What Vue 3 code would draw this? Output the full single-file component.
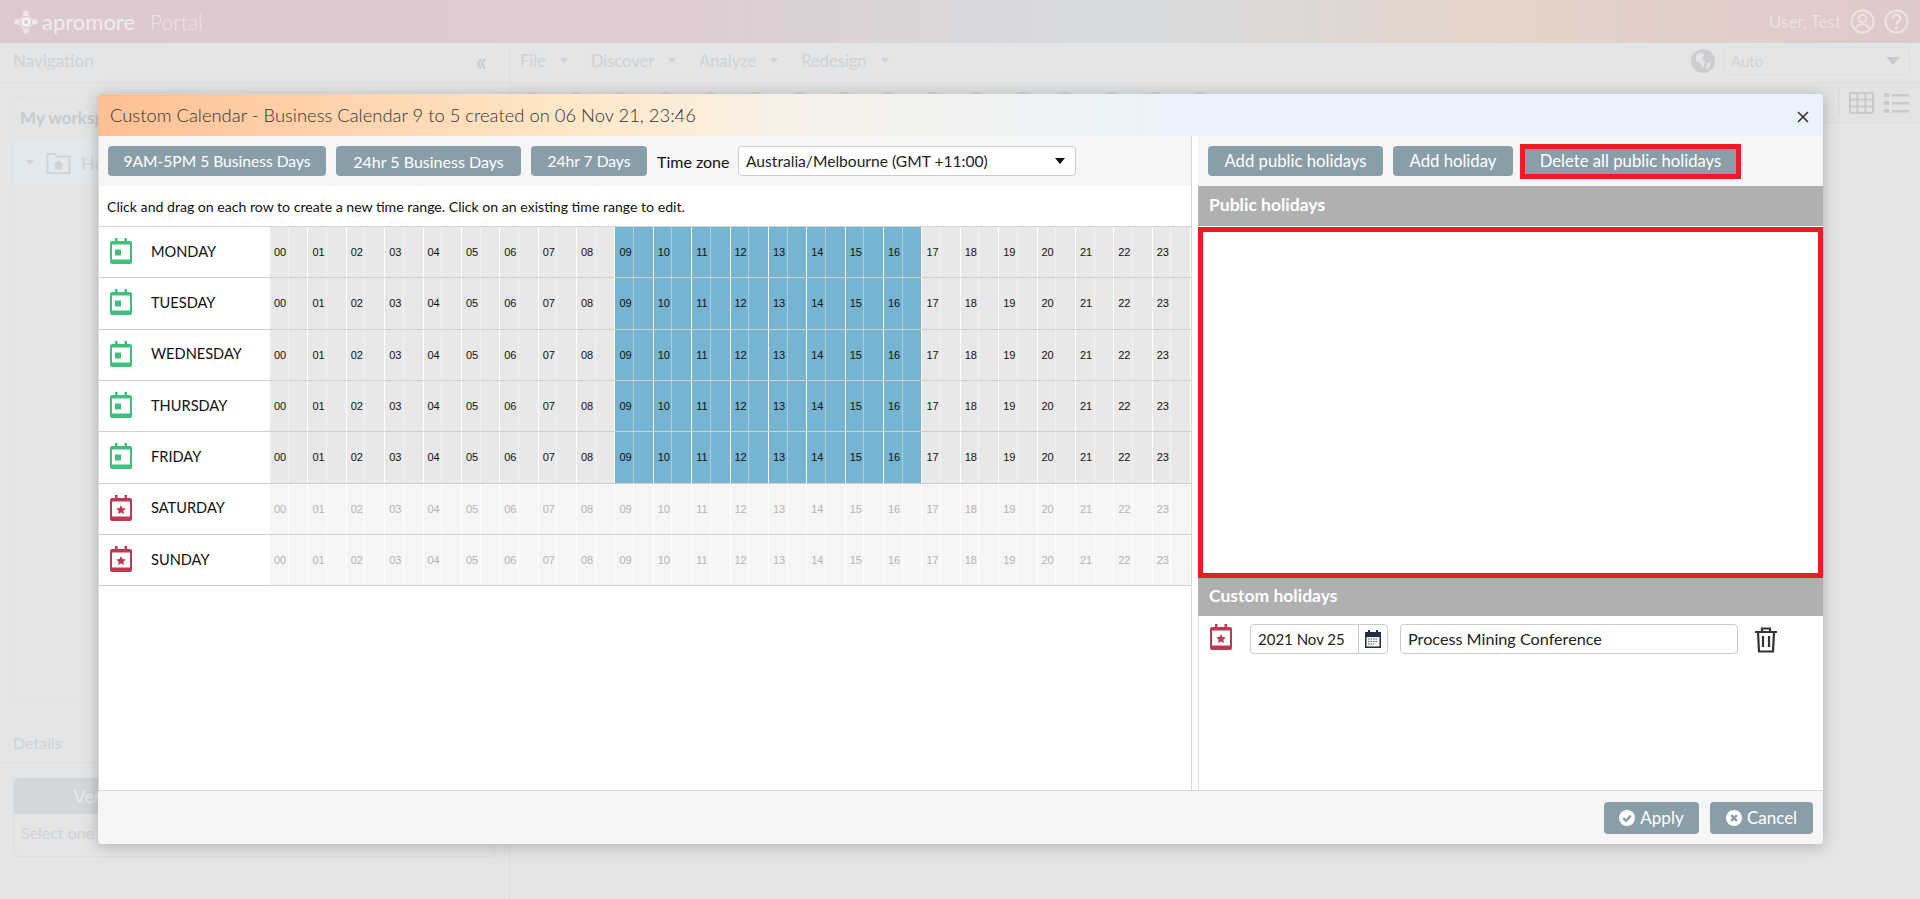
<template>
  <div class="page">
    <header class="topbar">
      <div class="brand">
        <svg class="brand-logo" width="24" height="24" viewBox="0 0 30 30">
          <path d="M15 4 26 15 15 26 4 15Z" fill="none" stroke="#f0e6e8" stroke-width="1.5" />
          <circle cx="15" cy="15" r="6" fill="#f6f1f2" />
          <circle cx="15" cy="15" r="2.5" fill="#dcc8cd" />
          <circle cx="15" cy="4" r="3.5" fill="#f0e6e8" />
          <circle cx="15" cy="26" r="3.5" fill="#f0e6e8" />
          <circle cx="4" cy="15" r="3.5" fill="#f0e6e8" />
          <circle cx="26" cy="15" r="3.5" fill="#f0e6e8" />
        </svg>
        <span class="brand-name">apromore</span>
        <span class="brand-portal">Portal</span>
      </div>
      <div class="user">
        <span>User, Test</span>
        <svg width="25" height="25" viewBox="0 0 26 26" fill="none" stroke="#eee4e2" stroke-width="2">
          <circle cx="13" cy="13" r="11.5" />
          <circle cx="13" cy="10" r="4" />
          <path d="M6 21c1-4.5 4-5 7-5s6 .5 7 5" />
        </svg>
        <svg width="25" height="25" viewBox="0 0 26 26" fill="none" stroke="#eee4e2" stroke-width="2">
          <circle cx="13" cy="13" r="11.5" />
          <path d="M9 10c0-5.5 8-5.5 8 0 0 3-4 3-4 6" stroke-width="2.5" />
          <circle cx="13" cy="19.5" r="0.8" />
        </svg>
      </div>
    </header>

    <div class="shell">
      <aside class="nav">
        <div class="nav-head">
          <span>Navigation</span>
          <span class="nav-collapse">«</span>
        </div>
        <div class="nav-tree">
          <div class="tree-title">My workspace</div>
          <div class="tree-row">
            <span class="caret"></span>
            <svg width="25" height="22" viewBox="0 0 26 24" fill="none" stroke="#d0d2d4" stroke-width="2">
              <path d="M1 23V2h8l2 3h14v18Z" />
              <path d="M13 9l6 5h-2v5H9v-5H7Z" fill="#d0d2d4" stroke="none" />
            </svg>
            <span>Home</span>
          </div>
        </div>
        <div class="nav-details">Details</div>
        <div class="details-card">
          <div class="details-title"><span>Version</span></div>
          <div class="details-body">Select one</div>
        </div>
      </aside>

      <main class="content">
        <div class="menu-bar">
          <span v-for="m in menus" :key="m" class="menu-item">{{ m }}<i class="caret"></i></span>
          <div class="menu-right">
            <svg width="24" height="24" viewBox="0 0 24 24">
              <circle cx="12" cy="12" r="12" fill="#cbcdcf" />
              <path d="M5 6l5-3 3 3-2 4 3 3-2 6-3-5-4-2Z M16 14l4-1-2 6-3 1Z" fill="#e3e5e7" />
            </svg>
            <div class="auto-select">Auto<i class="caret"></i></div>
          </div>
        </div>
        <div class="tool-bar">
          <i v-for="n in 16" :key="n" class="tool-dot"></i>
          <span class="tool-sep"></span>
          <svg width="25" height="22" viewBox="0 0 25 22" fill="none" stroke="#c8cacc" stroke-width="2">
            <rect x="1" y="1" width="23" height="20" rx="1" />
            <path d="M1 7.5h23M1 14.5h23M8.5 1v20M16.5 1v20" />
          </svg>
          <svg width="25" height="20" viewBox="0 0 25 20" fill="#c8cacc">
            <rect x="0" y="0" width="5" height="4" /><rect x="8" y="1" width="17" height="2.5" />
            <rect x="0" y="8" width="5" height="4" /><rect x="8" y="9" width="17" height="2.5" />
            <rect x="0" y="16" width="5" height="4" /><rect x="8" y="17" width="17" height="2.5" />
          </svg>
        </div>
      </main>
    </div>

    <section class="modal">
      <div class="modal-head">
        <span>Custom Calendar - Business Calendar 9 to 5 created on 06 Nov 21, 23:46</span>
        <svg class="modal-close" width="12" height="12" viewBox="0 0 12 12" fill="none" stroke="#2b2b2b" stroke-width="1.5">
          <path d="M1 1l10 10M11 1 1 11" />
        </svg>
      </div>
      <div class="modal-body">
        <div class="left-pane">
          <div class="toolbar">
            <button class="btn w-218">9AM-5PM 5 Business Days</button>
            <button class="btn w-185">24hr 5 Business Days</button>
            <button class="btn w-116">24hr 7 Days</button>
            <label class="tz-label">Time zone</label>
            <div class="tz-select">
              <span>Australia/Melbourne (GMT +11:00)</span>
              <i class="tz-caret"></i>
            </div>
          </div>
          <div class="hint">Click and drag on each row to create a new time range. Click on an existing time range to edit.</div>
          <div class="grid">
            <div v-for="day in days" :key="day.name" class="day-row">
              <div class="day-label">
                <svg class="day-icon" width="22" height="26" viewBox="0 0 22 26" :fill="day.off ? '#bd3b52' : '#3fc07a'">
                  <path fill-rule="evenodd" :d="calendarPath" />
                  <path v-if="day.off" :d="starPath" />
                  <rect v-else x="5" y="11.5" width="6" height="6" />
                </svg>
                <span>{{ day.name }}</span>
              </div>
              <div class="hours" :class="{ off: day.off }">
                <div v-for="h in hours" :key="h" class="hour" :class="{ on: !day.off && h >= 9 && h < 17 }">
                  <span class="half">{{ pad(h) }}</span>
                  <span class="half"></span>
                </div>
              </div>
            </div>
          </div>
        </div>

        <div class="right-pane">
          <div class="toolbar toolbar-right">
            <button class="btn w-175">Add public holidays</button>
            <button class="btn w-120">Add holiday</button>
            <button class="btn w-211 marked">Delete all public holidays</button>
          </div>
          <div class="section-head">Public holidays</div>
          <div class="public-list"></div>
          <div class="section-head section-head-2">Custom holidays</div>
          <div class="custom-list">
            <div class="custom-row">
              <svg width="22" height="26" viewBox="0 0 22 26" fill="#bd3b52">
                <path fill-rule="evenodd" :d="calendarPath" />
                <path :d="starPath" />
              </svg>
              <div class="date-input">
                <span class="date-value">2021 Nov 25</span>
                <span class="date-btn">
                  <svg width="16" height="18" viewBox="0 0 16 18">
                    <path d="M0 2h16v16H0Z" fill="#1f2f45" />
                    <rect x="3" y="0" width="2" height="4" fill="#1f2f45" />
                    <rect x="11" y="0" width="2" height="4" fill="#1f2f45" />
                    <rect x="1.5" y="7" width="13" height="9.5" fill="#f4f4f0" />
                    <path d="M3 9h10M3 11.5h10M3 14h6" stroke="#5b6a7c" stroke-width="1" stroke-dasharray="1.5 1" />
                  </svg>
                </span>
              </div>
              <div class="name-input">Process Mining Conference</div>
              <svg class="trash" width="22" height="26" viewBox="0 0 22 26" fill="none" stroke="#333" stroke-width="2.2">
                <path d="M0 5h22M7 5V1.5h8V5" />
                <path d="M3 5l1 19.5h14L19 5" />
                <path d="M8 9v11M14 9v11" />
              </svg>
            </div>
          </div>
        </div>
      </div>
      <div class="modal-foot">
        <button class="btn btn-foot w-95">
          <svg width="16" height="16" viewBox="0 0 17 17">
            <circle cx="8.5" cy="8.5" r="8.5" fill="#fff" />
            <path d="M4.5 8.5l3 3 5-5.5" fill="none" stroke="#8a9ea8" stroke-width="2.6" />
          </svg>
          Apply
        </button>
        <button class="btn btn-foot w-103">
          <svg width="16" height="16" viewBox="0 0 17 17">
            <circle cx="8.5" cy="8.5" r="8.5" fill="#fff" />
            <path d="M5.5 5.5l6 6M11.5 5.5l-6 6" fill="none" stroke="#8a9ea8" stroke-width="2.6" />
          </svg>
          Cancel
        </button>
      </div>
    </section>
  </div>
</template>

<script setup>
const menus = ['File', 'Discover', 'Analyze', 'Redesign']
const days = [
  { name: 'MONDAY', off: false },
  { name: 'TUESDAY', off: false },
  { name: 'WEDNESDAY', off: false },
  { name: 'THURSDAY', off: false },
  { name: 'FRIDAY', off: false },
  { name: 'SATURDAY', off: true },
  { name: 'SUNDAY', off: true },
]
const hours = Array.from({ length: 24 }, (_, i) => i)
const pad = (n) => String(n).padStart(2, '0')

const calendarPath = 'M5 0h2.5v3h7V0H17v3h3a2 2 0 0 1 2 2v19a2 2 0 0 1-2 2H2a2 2 0 0 1-2-2V5a2 2 0 0 1 2-2h3Zm-3 6.5v15h18v-15Z'
const starPath = 'M11 10l1.4 3.1 3.4.4-2.5 2.3.7 3.3-3-1.7-3 1.7.7-3.3-2.5-2.3 3.4-.4Z'
</script>

<style>
html, body { margin: 0; background: #e3e5e7; overflow: hidden; }
</style>

<style scoped>
.page {
  position: relative;
  width: 1920px;
  height: 899px;
  overflow: hidden;
  background: #e3e5e7;
  font-family: "Lato", "Liberation Sans", sans-serif;
  color: #d0d2d4;
  font-size: 16px;
}
.topbar {
  height: 43px;
  box-sizing: border-box;
  display: flex;
  justify-content: space-between;
  align-items: center;
  padding: 0 11px 0 14px;
  background: linear-gradient(90deg, #dcc9d0 0%, #ddccd0 35%, #d7dce0 58%, #e4d4c8 78%, #dec9cb 100%);
}
.brand { display: flex; align-items: center; color: #f2ecee; }
.brand-name { font-size: 22px; margin-left: 4px; }
.brand-portal { font-size: 21px; margin-left: 15px; font-weight: 300; color: #ebe3e3; }
.user { display: flex; align-items: center; gap: 9px; color: #ebe1df; font-size: 17px; }
.shell { display: flex; height: 856px; }
.nav { width: 510px; flex: none; border-right: 1px solid #dcdee0; box-sizing: border-box; display: flex; flex-direction: column; }
.nav-head {
  height: 40px;
  flex: none;
  box-sizing: border-box;
  display: flex;
  justify-content: space-between;
  align-items: center;
  padding: 0 13px 4px;
  border-bottom: 1px solid #dcdee0;
  font-size: 17px;
}
.nav-collapse { font-size: 26px; line-height: 1; margin-right: 9px; color: #c8cacc; }
.nav-tree { margin: 13px 13px 0; height: 604px; flex: none; box-sizing: border-box; border: 1px solid #dfe1e3; border-radius: 6px; }
.tree-title { height: 44px; box-sizing: border-box; padding: 10px 6px 0; font-weight: 700; font-size: 17px; color: #c8cacc; }
.tree-row {
  display: flex;
  align-items: center;
  height: 43px;
  padding-left: 12px;
  background: #e1e8ee;
  font-size: 18px;
}
.tree-row svg { margin: 0 10px 0 12px; }
.nav-details {
  margin-top: 23px;
  height: 40px;
  flex: none;
  box-sizing: border-box;
  display: flex;
  align-items: center;
  padding-left: 13px;
  border-bottom: 1px solid #dcdee0;
}
.details-card { margin: 14px 13px; border: 1px solid #dcdee0; border-radius: 6px; overflow: hidden; }
.details-title { height: 36px; background: #d2d7d9; color: #e8eaeb; line-height: 36px; font-size: 18px; }
.details-title span { display: block; width: 178px; text-align: center; }
.details-body { height: 42px; line-height: 38px; padding: 0 7px; font-size: 16px; }
.caret {
  display: inline-block;
  width: 0;
  height: 0;
  border-left: 4px solid transparent;
  border-right: 4px solid transparent;
  border-top: 5px solid #d0d2d4;
}
.content { flex: 1; display: flex; flex-direction: column; }
.menu-bar {
  height: 40px;
  flex: none;
  box-sizing: border-box;
  display: flex;
  align-items: center;
  padding: 0 10px 4px;
  border-bottom: 1px solid #dcdee0;
}
.menu-item { display: flex; align-items: center; gap: 14px; margin-right: 23px; font-size: 16.5px; }
.menu-right { margin-left: auto; display: flex; align-items: center; gap: 8px; }
.auto-select {
  width: 187px;
  height: 28px;
  padding: 0 7px;
  display: flex;
  justify-content: space-between;
  align-items: center;
  box-sizing: border-box;
  border: 1px solid #dcdee0;
  border-radius: 4px;
  font-size: 15px;
}
.auto-select .caret { border-left-width: 7px; border-right-width: 7px; border-top-width: 8px; border-top-color: #c8cacc; margin-right: 2px; }
.tool-bar {
  height: 40px;
  flex: none;
  box-sizing: border-box;
  display: flex;
  align-items: center;
  padding: 0 11px 0 14px;
  border-bottom: 1px solid #dcdee0;
  background: #e1e3e5;
}
.tool-dot {
  align-self: flex-start;
  width: 16px;
  height: 16px;
  margin: 9px 28.5px 0 0;
  border-radius: 50%;
  background: #d2d4d6;
}
.tool-sep { width: 1px; height: 28px; margin-left: auto; margin-right: 10px; background: #d4d6d8; }
.tool-bar svg + svg { margin-left: 10px; }

.modal {
  position: absolute;
  left: 98px;
  top: 94px;
  width: 1725px;
  height: 750px;
  display: flex;
  flex-direction: column;
  background: #f6f6f6;
  border-radius: 4px;
  box-shadow: 0 2px 16px rgba(0, 0, 0, 0.25);
  overflow: hidden;
  color: #222;
}
.modal-head {
  height: 42px;
  flex: none;
  display: flex;
  justify-content: space-between;
  align-items: center;
  padding: 0 14px 0 12px;
  background: linear-gradient(90deg, #ffbf93 0%, #ffe8c8 28%, #f7f1e8 40%, #eaf3fb 62%, #eaf3fb 100%);
  font-size: 18.4px;
  font-weight: 300;
  color: #333;
}
.modal-close { margin-top: 3px; }
.modal-body { flex: 1; display: flex; min-height: 0; background: #fff; }
.left-pane {
  width: 1094px;
  flex: none;
  box-sizing: border-box;
  background: #fff;
  border-left: 1px solid #dcdcdc;
  border-right: 1px solid #d8d8d8;
  display: flex;
  flex-direction: column;
}
.right-pane { width: 625px; flex: none; margin-left: 6px; background: #fff; display: flex; flex-direction: column; }
.toolbar {
  height: 50px;
  flex: none;
  display: flex;
  align-items: center;
  gap: 10px;
  padding: 0 9px;
  box-sizing: border-box;
  background: #f6f6f6;
}
.toolbar-right { padding-left: 10px; }
.btn {
  height: 30px;
  padding: 0;
  border: none;
  border-radius: 4px;
  background: #8a9ea8;
  color: #fff;
  font-family: "Lato", "Liberation Sans", sans-serif;
  font-size: 15.6px;
  flex: none;
}
.toolbar-right .btn { font-size: 16.7px; }
.w-218 { width: 218px; }
.w-185 { width: 185px; font-size: 16px; }
.w-116 { width: 116px; }
.w-175 { width: 175px; }
.w-120 { width: 120px; }
.w-211 { width: 211px; }
.w-95 { width: 95px; }
.w-103 { width: 103px; }
.marked { position: relative; margin-left: 2px; }
.marked::after {
  content: "";
  position: absolute;
  left: -5px;
  right: -5px;
  top: -2px;
  bottom: -3px;
  border: 5px solid #ed1c24;
}
.tz-label { width: 75px; flex: none; font-size: 16px; color: #111; margin-right: -4px; white-space: nowrap; }
.tz-select {
  width: 338px;
  height: 30px;
  display: flex;
  justify-content: space-between;
  align-items: center;
  padding: 0 10px 0 7px;
  box-sizing: border-box;
  background: #fff;
  border: 1px solid #ccc;
  border-radius: 4px;
  font-size: 15.6px;
}
.tz-caret {
  width: 0;
  height: 0;
  border-left: 5px solid transparent;
  border-right: 5px solid transparent;
  border-top: 6px solid #111;
}
.hint { height: 40px; flex: none; line-height: 41px; padding-left: 8px; font-size: 14.1px; color: #111; box-sizing: border-box; }
.grid { border-top: 1px solid #d4d4d4; }
.day-row { display: flex; height: 50.33px; border-bottom: 1px solid #d0d0d0; }
.day-label {
  width: 171px;
  flex: none;
  display: flex;
  align-items: center;
  font-size: 14.6px;
  color: #111;
  padding-bottom: 2px;
  box-sizing: border-box;
}
.day-icon { margin: 0 19px 0 11px; flex: none; }
.hours { flex: 1; display: grid; grid-template-columns: repeat(24, 1fr); }
.hour { display: flex; background: #e8e8e8; border-right: 1px solid #fff; box-sizing: border-box; }
.hour.on { background: #76b4d1; }
.half {
  width: 50%;
  display: flex;
  align-items: center;
  padding-left: 4px;
  box-sizing: border-box;
  font-family: "Liberation Sans", sans-serif;
  font-size: 11px;
  color: #111;
  border-right: 1px solid #f2f2f2;
}
.half:last-child { border-right: none; }
.on .half { border-right-color: #a6cfe1; }
.off .hour { background: #f5f5f5; }
.off .half { color: #b4b4b4; border-right-color: #fff; }
.section-head {
  height: 40px;
  flex: none;
  box-sizing: border-box;
  display: flex;
  align-items: center;
  padding: 0 0 3px 11px;
  background: #b0b0b0;
  color: #fff;
  font-weight: 700;
  font-size: 17.5px;
}
.section-head-2 { height: 38px; }
.public-list { height: 351px; flex: none; margin-top: 1px; box-sizing: border-box; border: 5px solid #ed1c24; background: #fff; }
.custom-list { flex: 1; padding: 8px 11px; border-left: 1px solid #dcdcdc; }
.custom-row { display: flex; align-items: flex-start; }
.date-input {
  width: 138px;
  height: 30px;
  margin-left: 18px;
  display: flex;
  box-sizing: border-box;
  border: 1px solid #ccc;
  border-radius: 4px;
  align-items: center;
  font-size: 15px;
}
.date-value { flex: 1; padding-left: 7px; }
.date-btn { width: 29px; height: 100%; border-left: 1px solid #ccc; box-sizing: border-box; display: flex; align-items: center; justify-content: center; }
.name-input {
  width: 338px;
  height: 30px;
  margin-left: 12px;
  line-height: 28px;
  padding-left: 7px;
  box-sizing: border-box;
  border: 1px solid #ccc;
  border-radius: 4px;
  font-size: 16.2px;
}
.trash { margin: 3px 0 0 17px; }
.modal-foot {
  height: 54px;
  flex: none;
  display: flex;
  justify-content: flex-end;
  align-items: center;
  gap: 11px;
  padding-right: 10px;
  border-top: 1px solid #d8d8d8;
  box-sizing: border-box;
}
.btn-foot { display: flex; align-items: center; justify-content: center; gap: 5px; height: 32px; font-size: 17px; }
</style>
